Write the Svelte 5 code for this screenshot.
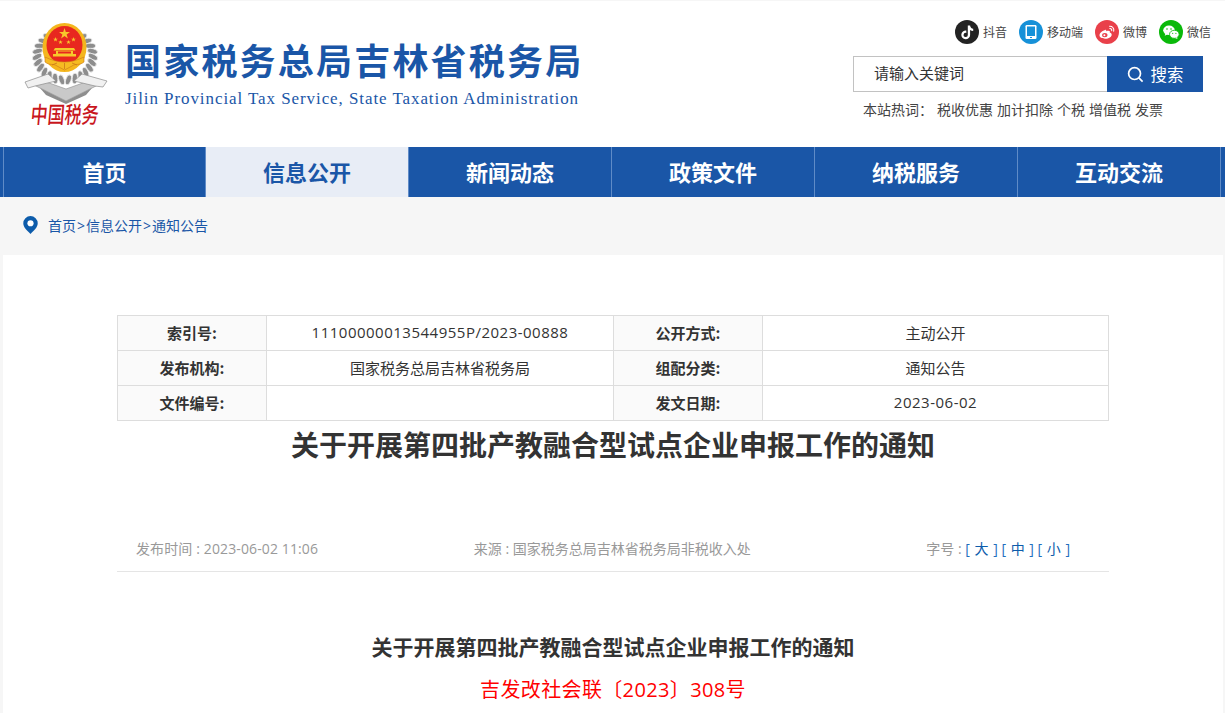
<script>
  const navItems = ['首页', '信息公开', '新闻动态', '政策文件', '纳税服务', '互动交流'];
  const hotWords = ['税收优惠', '加计扣除', '个税', '增值税', '发票'];
  const infoRows = [
    ['索引号:', '11100000013544955P/2023-00888', '公开方式:', '主动公开'],
    ['发布机构:', '国家税务总局吉林省税务局', '组配分类:', '通知公告'],
    ['文件编号:', '', '发文日期:', '2023-06-02']
  ];
  const title = '关于开展第四批产教融合型试点企业申报工作的通知';
  const isNum = (s) => /^\d/.test(s);

  // wreath leaves laid out on an ellipse round the emblem, both sides
  const leaves = [];
  for (const side of [-1, 1]) {
    for (let i = 0; i < 11; i++) {
      const a = ((38 + i * 13.5) * Math.PI) / 180;
      leaves.push({
        x: 45 + side * 28 * Math.sin(a),
        y: 41 - 24 * Math.cos(a),
        r: side * (38 + i * 13.5 + 25)
      });
    }
  }
</script>

<div class="page">
  <header class="head">
    <svg class="logo" viewBox="0 0 90 115" aria-label="中国税务">
      {#each leaves as l}
        <ellipse cx={l.x} cy={l.y} rx="2.600" ry="5.200" fill="#8d8d8d" stroke="#ededed" stroke-width=".8" transform="rotate({l.r} {l.x} {l.y})" />
      {/each}
      <path d="M14 70 L46 86 L78 70 L74 64 L46 74 L18 64 Z" fill="#c9c9c9" stroke="#8b8b8b" stroke-width=".6" />
      <path d="M20 73 L46 86 L72 73 L66 80 L46 89 L26 80 Z" fill="#8e8e8e" />
      <path d="M5 67 L28 59 L36 66 L15 71 L8 73 Z" fill="#f1f1f1" stroke="#8b8b8b" stroke-width=".7" />
      <path d="M87 66 L62 59 L54 66 L75 71 L83 72 Z" fill="#f1f1f1" stroke="#8b8b8b" stroke-width=".7" />
      <ellipse cx="44.500" cy="32.500" rx="22" ry="24.500" fill="#f4b61e" />
      <ellipse cx="44.500" cy="30" rx="18" ry="19" fill="#e8281f" />
      <path d="M44.500 13l1.300 4h4.200l-3.400 2.500 1.300 4-3.400-2.500-3.400 2.500 1.300-4-3.400-2.500h4.200z" fill="#f7c82b" />
      <path d="M35.500 22l.6 1.700h1.800l-1.500 1.100.6 1.800-1.500-1.100-1.500 1.100.6-1.800-1.500-1.100h1.800zM53.500 22l.6 1.700h1.800l-1.500 1.100.6 1.800-1.500-1.100-1.500 1.100.6-1.800-1.500-1.100h1.800zM40.500 25l.6 1.500h1.600l-1.300 1 .5 1.600-1.400-1-1.400 1 .5-1.600-1.300-1h1.600zM48.500 25l.6 1.500h1.600l-1.300 1 .5 1.600-1.400-1-1.400 1 .5-1.600-1.300-1h1.600z" fill="#f7c82b" />
      <path d="M35 33h19l1.500 2.500h-22zM36 36h17v3H36zM33 39h23v2.500H33z" fill="#f7c82b" />
      <path d="M38 36.500h13v2H38z" fill="#e8281f" />
      <path d="M25 42c6 3 13 5 19.500 5s13.500-2 19.500-5v5c-5 4-8 1-12 4l-7.500 4-7.500-4c-4-3-7 0-12-4z" fill="#f6bb22" stroke="#c9771a" stroke-width=".6" />
      <path d="M32 50l5-2M57 50l-5-2M44.500 48v6" stroke="#c9771a" stroke-width=".8" />
      <text class="sign" transform="translate(44 108) scale(1 1.35) skewX(-7)">中国税务</text>
    </svg>
    <div class="brand">
      <div class="brand-cn">国家税务总局吉林省税务局</div>
      <div class="brand-en">Jilin Provincial Tax Service, State Taxation Administration</div>
    </div>
    <div class="tools">
      <div class="social">
        <span class="soc">
          <svg viewBox="0 0 24 24"><circle cx="12" cy="12" r="12" fill="#232323" />
            <path d="M12.800 5.500h2.300c.2 1.900 1.300 3 3.100 3.200v2.300c-1.200 0-2.200-.3-3.100-1v4.900a4.400 4.400 0 1 1-3.800-4.400v2.400a2.100 2.100 0 1 0 1.500 2z" fill="#fff" /></svg>
          抖音
        </span>
        <span class="soc">
          <svg viewBox="0 0 24 24"><circle cx="12" cy="12" r="12" fill="#1691d8" />
            <rect x="6.500" y="5" width="11" height="14" rx="1.200" fill="#fff" /><rect x="8" y="6.500" width="8" height="9.500" fill="#1691d8" /><rect x="11" y="17" width="2" height="1" fill="#1691d8" /></svg>
          移动端
        </span>
        <span class="soc">
          <svg viewBox="0 0 24 24"><circle cx="12" cy="12" r="12" fill="#e9404a" />
            <path d="M10.500 10c-3 .6-6 3-6 5.300 0 2 2.500 3.400 5.700 3.400 3.700 0 6.500-2 6.500-4 0-1.400-1.300-1.900-2-2.100.4-1 .3-1.900-1.500-1.800-1 0-2 .5-2 .5.200-1.200-.2-1.700-.7-1.800z" fill="#fff" />
            <ellipse cx="9.800" cy="15.100" rx="2.700" ry="2.200" fill="#e9404a" /><circle cx="9.400" cy="15.300" r="1" fill="#fff" />
            <path d="M14.500 6.300c2.700-.3 4.900 1.900 4.200 4.800M14.800 8.500c1.300-.2 2.200.9 1.900 2.100" fill="none" stroke="#fff" stroke-width="1.100" stroke-linecap="round" /></svg>
          微博
        </span>
        <span class="soc">
          <svg viewBox="0 0 24 24"><circle cx="12" cy="12" r="12" fill="#0ab90a" />
            <ellipse cx="10" cy="10.300" rx="5.800" ry="4.800" fill="#fff" /><path d="M6.500 13.500l-.8 2.300 2.600-1.300z" fill="#fff" />
            <ellipse cx="15.300" cy="14.300" rx="4.800" ry="4" fill="#fff" stroke="#0ab90a" stroke-width=".8" /><path d="M17.800 17.300l.7 1.800-2.300-1.100z" fill="#fff" />
            <circle cx="8" cy="9" r=".8" fill="#0ab90a" /><circle cx="12" cy="9" r=".8" fill="#0ab90a" /><circle cx="13.700" cy="13.300" r=".6" fill="#0ab90a" /><circle cx="16.900" cy="13.300" r=".6" fill="#0ab90a" /></svg>
          微信
        </span>
      </div>
      <div class="search">
        <div class="search-input">请输入关键词</div>
        <div class="search-btn">
          <svg viewBox="0 0 18 18"><circle cx="8" cy="8" r="6.300" fill="none" stroke="#fff" stroke-width="1.800" /><path d="M12.600 12.600L16.500 16.500" stroke="#fff" stroke-width="1.800" /></svg>
          搜索
        </div>
      </div>
      <div class="hot">
        <span class="hot-label">本站热词：</span>
        {#each hotWords as w}<span>{w}</span>{/each}
      </div>
    </div>
  </header>

  <nav class="nav">
    {#each navItems as item, i}
      <div class="nav-item" class:active={i === 1}>{item}</div>
    {/each}
  </nav>

  <div class="crumb">
    <svg viewBox="0 0 16 19"><path d="M8 0a7.700 7.700 0 0 1 7.700 7.700c0 4-3.700 7.800-7.700 11.300C4 15.500.3 11.700.3 7.700A7.700 7.700 0 0 1 8 0z" fill="#0d5cab" /><circle cx="8" cy="7.600" r="3.300" fill="#fff" /></svg>
    <span>首页<i>&gt;</i>信息公开<i>&gt;</i>通知公告</span>
  </div>

  <main class="main">
    <table class="info">
      <colgroup><col class="c-k" /><col class="c-v" /><col class="c-k" /><col class="c-l" /></colgroup>
      <tbody>
        {#each infoRows as r}
          <tr>
            <th>{r[0]}</th><td class:num={isNum(r[1])}>{r[1]}</td><th>{r[2]}</th><td class:num={isNum(r[3])}>{r[3]}</td>
          </tr>
        {/each}
      </tbody>
    </table>
    <h1>{title}</h1>
    <div class="meta">
      <span class="date">发布时间 : 2023-06-02 11:06</span>
      <span class="source">来源 : 国家税务总局吉林省税务局非税收入处</span>
      <span>字号 : <em>[</em> <b>大</b> <em>]</em> <em>[</em> <b>中</b> <em>]</em> <em>[</em> <b>小</b> <em>]</em></span>
    </div>
    <h2>{title}</h2>
    <p class="docno">吉发改社会联〔2023〕308号</p>
  </main>
</div>

<style>
  :global(body) {
    margin: 0;
    background: #f6f6f6;
    overflow: hidden;
  }
  .page {
    height: 713px;
    overflow: hidden;
    font-family: "Open Sans", "Noto Sans CJK SC", sans-serif;
    font-size: 14px;
    color: #333;
  }

  .head {
    display: flex;
    height: 146px;
    margin-top: 1px;
    background: #fff;
    box-sizing: border-box;
  }
  .logo { width: 90px; height: 115px; margin: 14px 15px 0 20px; flex: none; }
  .sign { font-family: "Noto Sans CJK SC", sans-serif; font-size: 17px; font-weight: 500; fill: #c9161d; text-anchor: middle; }
  .brand { padding-top: 34px; }
  .brand-cn {
    font-family: "Noto Sans CJK SC", sans-serif;
    font-size: 36px;
    font-weight: 700;
    letter-spacing: 2.2px;
    line-height: 48px;
    color: #1a56a7;
    white-space: nowrap;
  }
  .brand-en {
    margin-top: 5px;
    font-family: "Liberation Serif", serif;
    font-size: 17px;
    letter-spacing: .92px;
    line-height: 22px;
    color: #1a56a7;
    white-space: nowrap;
  }

  .tools { margin-left: auto; width: 372px; flex: none; }
  .social {
    display: flex;
    justify-content: flex-end;
    gap: 12px;
    padding: 19px 14px 0 0;
    height: 55px;
    box-sizing: border-box;
  }
  .soc { display: flex; align-items: center; gap: 4px; font-size: 12px; height: 24px; color: #444; white-space: nowrap; }
  .soc svg { width: 24px; height: 24px; }
  .search { display: flex; width: 350px; height: 36px; }
  .search-input {
    flex: 1;
    box-sizing: border-box;
    border: 1px solid #c2c2c2;
    border-right: 0;
    padding-left: 20px;
    font-size: 15px;
    line-height: 33px;
    color: #333;
  }
  .search-btn {
    width: 96px;
    display: flex;
    align-items: center;
    justify-content: center;
    gap: 7px;
    background: #1a56a7;
    color: #fff;
    font-size: 16.500px;
  }
  .search-btn svg { width: 17px; height: 17px; }
  .hot { display: flex; gap: 4px; padding: 8px 0 0 10px; line-height: 20px; color: #444; white-space: nowrap; }
  .hot-label { width: 70px; }

  .nav {
    display: flex;
    height: 50px;
    padding-left: 3px;
    background: #1a56a7;
  }
  .nav-item {
    width: 203px;
    box-sizing: border-box;
    border-left: 1px solid #5f8bc7;
    text-align: center;
    font-family: "Noto Sans CJK SC", sans-serif;
    font-size: 22px;
    font-weight: 700;
    line-height: 48px;
    color: #fff;
  }
  .nav-item:first-child { width: 202px; }
  .nav-item:last-child { width: 204px; border-right: 1px solid #5f8bc7; }
  .nav-item.active { background: #e8edf6; color: #1a56a7; }

  .crumb {
    display: flex;
    align-items: center;
    gap: 10px;
    height: 58px;
    padding: 0 0 2px 23px;
    box-sizing: border-box;
    color: #1a56a7;
  }
  .crumb svg { width: 15px; height: 18px; }
  .crumb i { font-style: normal; padding: 0 1px; }

  .main { margin: 0 2px 0 3px; padding-top: 60px; height: 458px; background: #fff; }
  .info {
    width: 991px;
    margin: 0 0 0 114px;
    border-collapse: collapse;
    table-layout: fixed;
    text-align: center;
  }
  .c-k { width: 149px; }
  .c-v { width: 347px; }
  .c-l { width: 346px; }
  .info th, .info td { height: 35px; padding: 0 0 2px; border: 1px solid #ddd; font-size: 15px; color: #333; box-sizing: border-box; }
  .info th { background: #fafafa; font-weight: 700; font-family: "Noto Sans CJK SC", sans-serif; }
  .info td.num { letter-spacing: .5px; }
  h1 {
    margin: 0;
    text-align: center;
    font-family: "Noto Sans CJK SC", sans-serif;
    font-size: 28px;
    line-height: 46px;
    font-weight: 700;
    color: #333;
  }
  .meta {
    display: flex;
    justify-content: space-between;
    width: 992px;
    height: 35px;
    margin: 70px auto 0;
    padding: 1px 39px 0 19px;
    box-sizing: border-box;
    border-bottom: 1px solid #e5e5e5;
    color: #999;
    line-height: 22px;
  }
  .date { letter-spacing: .12px; }
  .source { margin-left: -20px; }
  .meta em { font-style: normal; color: #1f6fbe; }
  .meta b { font-weight: 400; color: #0d5cab; padding: 0 1px; }
  h2 {
    margin: 59px 0 0;
    text-align: center;
    font-family: "Noto Sans CJK SC", sans-serif;
    font-size: 21px;
    line-height: 30px;
    font-weight: 700;
    color: #333;
  }
  .docno {
    margin: 14px 0 0;
    text-align: center;
    font-size: 20px;
    letter-spacing: .36px;
    line-height: 30px;
    color: #f00;
  }
</style>
